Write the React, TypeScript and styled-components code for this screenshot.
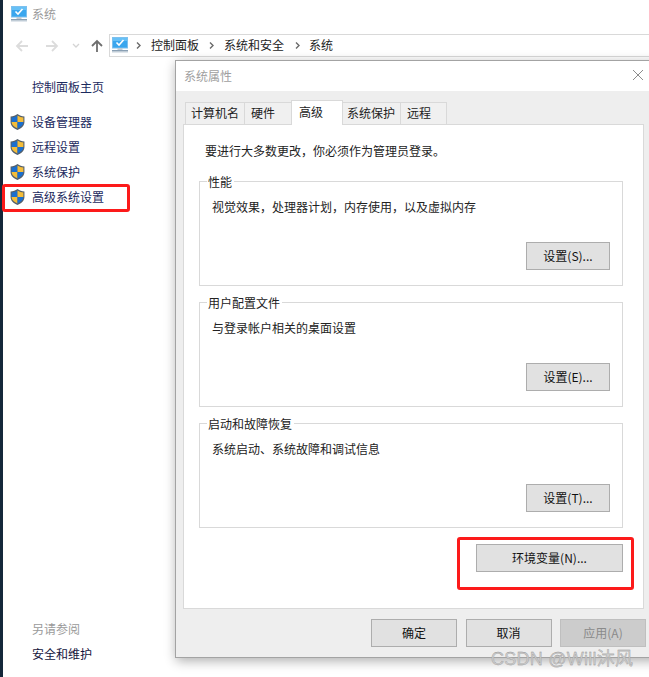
import React from "react";
import styled, { createGlobalStyle } from "styled-components";

const Global = createGlobalStyle`
  html, body { margin: 0; padding: 0; background: #fff; }
  * { box-sizing: border-box; }
`;

const Screen = styled.div`
  position: relative;
  width: 649px;
  height: 677px;
  overflow: hidden;
  display: flex;
  background: #fff;
  font-family: "Noto Sans CJK SC", "Noto Sans", sans-serif;
  font-size: 12px;
  line-height: 16px;
  color: #1a1a1a;
`;
const DesktopEdge = styled.div`
  width: 3px;
  flex: none;
  background: #14273a;
`;
const Explorer = styled.div`
  flex: 1;
  display: flex;
  flex-direction: column;
  min-width: 0;
`;
const TitleBar = styled.div`
  height: 34px;
  padding: 6px 0 0 8px;
  display: flex;
  align-items: flex-start;
  gap: 5px;
  color: #9a9a9a;
`;
const NavRow = styled.div`
  height: 23px;
  display: flex;
  align-items: center;
`;
const NavIcons = styled.div`
  width: 106px;
  flex: none;
  padding-left: 12px;
  display: flex;
  align-items: center;
`;
const AddressBar = styled.div`
  flex: 1;
  height: 23px;
  display: flex;
  align-items: center;
  padding: 0 0 2px 2px;
  border: 1px solid #d9d9d9;
  border-right: 0;
  color: #222;
`;
const Crumb = styled.span`
  margin-left: ${(p: { $gap: number }) => p.$gap}px;
`;
const Content = styled.div`
  flex: 1;
  display: flex;
  flex-direction: column;
  justify-content: space-between;
  padding: 22px 0 15px 0;
`;
const SideNav = styled.nav`
  display: flex;
  flex-direction: column;
  color: #1c2a5e;
`;
const HomeLink = styled.div`
  padding-left: 29px;
  margin-bottom: 14px;
`;
const SideItem = styled.div`
  height: 25px;
  display: flex;
  align-items: center;
  gap: 7px;
  padding-left: 7px;
`;
const SeeAlso = styled.div`
  display: flex;
  flex-direction: column;
  gap: 9px;
  padding-left: 29px;
`;
const SeeAlsoTitle = styled.div`
  color: #9a9a9a;
`;
const SeeAlsoLink = styled.div`
  color: #14143c;
`;

const Dialog = styled.div`
  position: absolute;
  left: 175px;
  top: 60px;
  width: 490px;
  height: 598px;
  display: flex;
  flex-direction: column;
  background: #eeeeee;
  border: 1px solid #a3a3a3;
  box-shadow: 1px 3px 11px rgba(0, 0, 0, 0.32);
`;
const DialogTitle = styled.div`
  height: 30px;
  flex: none;
  background: #fff;
  padding: 7px 0 0 8px;
  color: #a0a0a0;
  position: relative;
`;
const CloseIcon = styled.svg`
  position: absolute;
  left: 456px;
  top: 8px;
`;
const DialogBody = styled.div`
  flex: 1;
  display: flex;
  flex-direction: column;
  padding: 9px 0 0 7px;
`;
const Tabs = styled.div`
  height: 25px;
  display: flex;
  align-items: flex-end;
  padding-left: 2px;
  margin-bottom: -1px;
  position: relative;
`;
const Tab = styled.div<{ $w: number; $pad: number; $active?: boolean }>`
  width: ${(p) => p.$w}px;
  height: ${(p) => (p.$active ? 25 : 23)}px;
  padding: ${(p) => (p.$active ? 3 : 2)}px 0 0 ${(p) => p.$pad}px;
  background: ${(p) => (p.$active ? "#fff" : "#f0f0f0")};
  border: 1px solid #d9d9d9;
  border-bottom: ${(p) => (p.$active ? "0" : "1px solid #d9d9d9")};
  margin-right: -1px;
  position: relative;
  z-index: ${(p) => (p.$active ? 1 : 0)};
  color: #222;
`;
const TabPanel = styled.div`
  width: 461px;
  height: 485px;
  background: #fff;
  border: 1px solid #d9d9d9;
  padding: 18px 0 0 15px;
  display: flex;
  flex-direction: column;
`;
const Notice = styled.div`
  padding-left: 6px;
  margin-bottom: 22px;
  color: #222;
`;
const Group = styled.section`
  width: 424px;
  height: 105px;
  border: 1px solid #d9d9d9;
  margin-bottom: 16px;
  padding: 0 12px 15px 12px;
  display: flex;
  flex-direction: column;
`;
const GroupLabel = styled.div`
  align-self: flex-start;
  margin: -8px 0 0 -5px;
  padding: 0 2px 0 1px;
  background: #fff;
  color: #222;
`;
const GroupText = styled.div`
  flex: 1;
  padding-top: 9px;
  color: #222;
`;
const Button = styled.div<{ $w: number; $off?: boolean }>`
  width: ${(p) => p.$w}px;
  height: 28px;
  flex: none;
  display: flex;
  align-items: center;
  justify-content: center;
  background: ${(p) => (p.$off ? "#cccccc" : "#e1e1e1")};
  border: 1px solid ${(p) => (p.$off ? "#bfbfbf" : "#adadad")};
  color: ${(p) => (p.$off ? "#8a8a8a" : "#111")};
`;
const GroupActions = styled.div`
  display: flex;
  justify-content: flex-end;
`;
const PanelActions = styled.div`
  width: 424px;
  display: flex;
  justify-content: flex-end;
`;
const DialogFooter = styled.div`
  display: flex;
  gap: 8.5px;
  padding: 10px 0 0 195px;
  margin-left: -7px;
`;

const Callout = styled.div<{ $x: number; $y: number; $w: number; $h: number }>`
  position: absolute;
  left: ${(p) => p.$x}px;
  top: ${(p) => p.$y}px;
  width: ${(p) => p.$w}px;
  height: ${(p) => p.$h}px;
  border: 3px solid #fc1a1a;
  border-radius: 3px;
`;
const Watermark = styled.div`
  position: absolute;
  left: 491px;
  top: 649px;
  font-family: "Liberation Sans", "Noto Sans CJK SC", sans-serif;
  font-size: 18px;
  line-height: 20px;
  letter-spacing: 0.25px;
  white-space: nowrap;
  color: #cdcdcd;
  -webkit-text-stroke: 0.3px #8f8f8f;
`;

const Monitor = () => (
  <svg width="16" height="16" viewBox="0 0 16 16">
    <rect x="0.5" y="0.5" width="15" height="10.5" fill="#3aa6ee" stroke="#7cc0ee" strokeWidth="1" />
    <rect x="1" y="1" width="14" height="3" fill="#66c0f6" />
    <path d="M4.5 5.5l2.5 2.5 4.5-5" fill="none" stroke="#fff" strokeWidth="1.6" />
    <rect x="5.5" y="11" width="5" height="2" fill="#c2ccd6" />
    <rect x="0" y="13" width="16" height="1.6" fill="#8aa0b4" />
    <rect x="0" y="14.6" width="16" height="1" fill="#ccd6df" />
  </svg>
);
const Shield = () => (
  <svg width="15" height="16" viewBox="1 0.5 13 15">
    <path d="M7.5.5C5.5 2 3.5 2.6 1 2.8V8c0 3.4 2.6 5.8 6.5 7.5C11.4 13.8 14 11.4 14 8V2.8C11.5 2.6 9.5 2 7.5.5z" fill="#54606c" />
    <path d="M7.5 1.8C5.8 3 4 3.5 2 3.7V8h5.5z" fill="#1a6fd0" />
    <path d="M7.5 1.8C9.2 3 11 3.5 13 3.7V8H7.5z" fill="#f4bd3a" />
    <path d="M2 8h5.5v6C4.4 12.6 2 10.8 2 8z" fill="#f4bd3a" />
    <path d="M13 8H7.5v6c3.1-1.4 5.5-3.2 5.5-6z" fill="#1a6fd0" />
  </svg>
);
const Arrow = ({ color, dir, mr }: { color: string; dir: "l" | "r" | "u"; mr: number }) => (
  <svg width="14" height="14" viewBox="0 0 14 14" style={{ marginRight: mr }}>
    <path
      d={
        dir === "l"
          ? "M13 7H2M7 2L2 7l5 5"
          : dir === "r"
            ? "M1 7h11M7 2l5 5-5 5"
            : "M7 13V2M2 7l5-5 5 5"
      }
      fill="none"
      stroke={color}
      strokeWidth="1.8"
    />
  </svg>
);
const Chevron = () => (
  <svg width="9" height="9" viewBox="0 0 9 9">
    <path d="M3 1.5l3 3-3 3" fill="none" stroke="#6a6a6a" strokeWidth="1.4" />
  </svg>
);

const groups = [
  { title: "性能", text: "视觉效果，处理器计划，内存使用，以及虚拟内存", btn: "设置(S)..." },
  { title: "用户配置文件", text: "与登录帐户相关的桌面设置", btn: "设置(E)..." },
  { title: "启动和故障恢复", text: "系统启动、系统故障和调试信息", btn: "设置(T)..." },
];
const tabs = [
  { t: "计算机名", w: 60, pad: 5 },
  { t: "硬件", w: 48, pad: 6 },
  { t: "高级", w: 52, pad: 7, active: true },
  { t: "系统保护", w: 59, pad: 4 },
  { t: "远程", w: 47, pad: 6 },
];

export default function App() {
  return (
    <Screen>
      <Global />
      <DesktopEdge />
      <Explorer>
        <TitleBar>
          <Monitor />
          <span>系统</span>
        </TitleBar>
        <NavRow>
          <NavIcons>
            <Arrow color="#dcdcdc" dir="l" mr={16} />
            <Arrow color="#dcdcdc" dir="r" mr={13} />
            <svg width="8" height="6" viewBox="0 0 8 6" style={{ marginRight: 10 }}>
              <path d="M1 1l3 3 3-3" fill="none" stroke="#d4d4d4" strokeWidth="1.3" />
            </svg>
            <Arrow color="#6e6e6e" dir="u" mr={0} />
          </NavIcons>
          <AddressBar>
            <Monitor />
            <Crumb $gap={6}>
              <Chevron />
            </Crumb>
            <Crumb $gap={8}>控制面板</Crumb>
            <Crumb $gap={8}>
              <Chevron />
            </Crumb>
            <Crumb $gap={8}>系统和安全</Crumb>
            <Crumb $gap={9}>
              <Chevron />
            </Crumb>
            <Crumb $gap={7}>系统</Crumb>
          </AddressBar>
        </NavRow>
        <Content>
          <SideNav>
            <HomeLink>控制面板主页</HomeLink>
            <SideItem><Shield />设备管理器</SideItem>
            <SideItem><Shield />远程设置</SideItem>
            <SideItem><Shield />系统保护</SideItem>
            <SideItem><Shield />高级系统设置</SideItem>
          </SideNav>
          <SeeAlso>
            <SeeAlsoTitle>另请参阅</SeeAlsoTitle>
            <SeeAlsoLink>安全和维护</SeeAlsoLink>
          </SeeAlso>
        </Content>
      </Explorer>

      <Dialog>
        <DialogTitle>
          系统属性
          <CloseIcon width="12" height="12" viewBox="0 0 12 12">
            <path d="M1 1l10 10M11 1L1 11" stroke="#8c8c8c" strokeWidth="1" fill="none" />
          </CloseIcon>
        </DialogTitle>
        <DialogBody>
          <Tabs>
            {tabs.map((t) => (
              <Tab key={t.t} $w={t.w} $pad={t.pad} $active={t.active}>{t.t}</Tab>
            ))}
          </Tabs>
          <TabPanel>
            <Notice>要进行大多数更改，你必须作为管理员登录。</Notice>
            {groups.map((g) => (
              <Group key={g.title}>
                <GroupLabel>{g.title}</GroupLabel>
                <GroupText>{g.text}</GroupText>
                <GroupActions>
                  <Button $w={84}>{g.btn}</Button>
                </GroupActions>
              </Group>
            ))}
            <PanelActions>
              <Button $w={147}>环境变量(N)...</Button>
            </PanelActions>
          </TabPanel>
          <DialogFooter>
            <Button $w={86}>确定</Button>
            <Button $w={86}>取消</Button>
            <Button $w={86} $off>应用(A)</Button>
          </DialogFooter>
        </DialogBody>
      </Dialog>

      <Callout $x={2} $y={184} $w={128} $h={28} />
      <Callout $x={457} $y={537} $w={177} $h={53} />
      <Watermark>CSDN @Will沐风</Watermark>
    </Screen>
  );
}
